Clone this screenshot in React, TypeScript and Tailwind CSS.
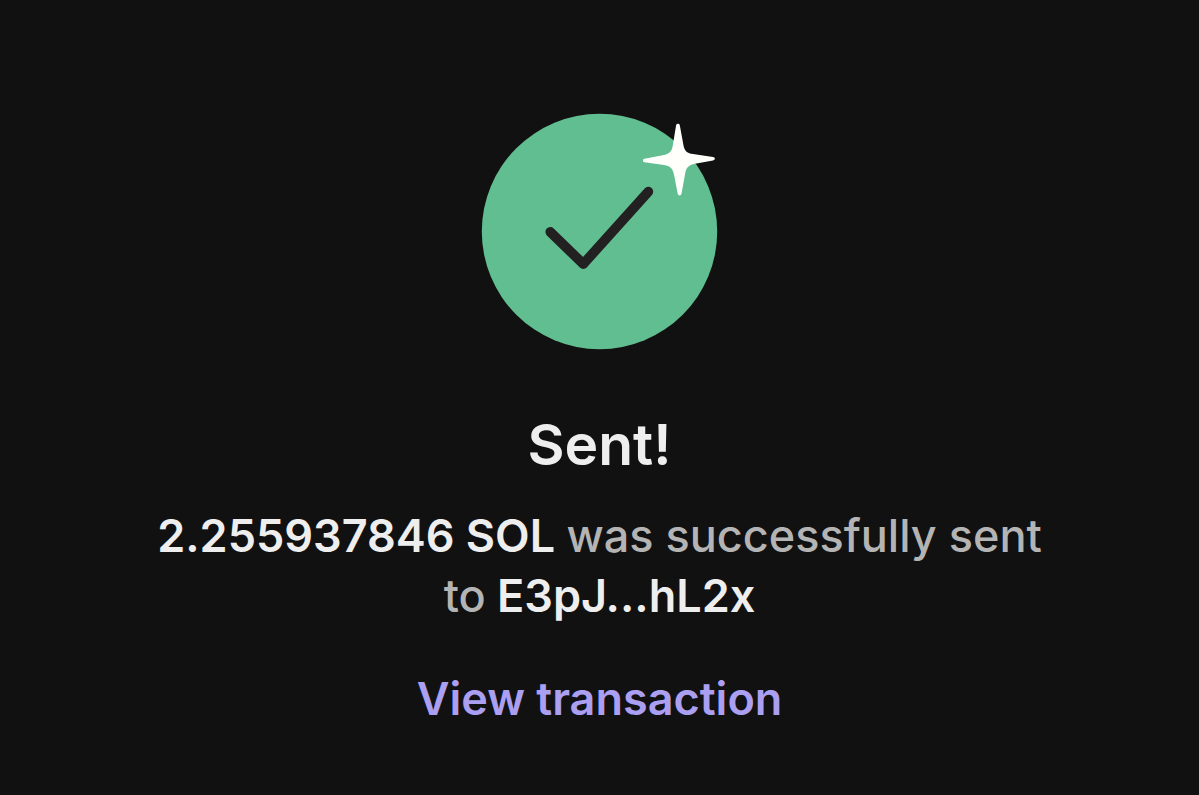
export default function App() {
  return (
    <main className="flex min-h-screen flex-col items-center bg-[#111111] px-36 pt-[113px] pb-16 text-center font-['Inter',sans-serif] font-semibold text-[#eeeeee]">
      <svg className="h-[237px] w-[237px] shrink-0" viewBox="481 113 237 237" fill="none" aria-hidden="true">
        <circle cx="599.5" cy="231.5" r="117.7" fill="#61be91" />
        <path d="M550.3 232L583.3 264L648.3 191.700" stroke="#222021" strokeWidth="9.800" strokeLinecap="round" strokeLinejoin="round" />
        <path
          d="M676.100 125.200Q676.400 123.800 678 123.800Q679.500 123.800 679.800 125.200L683.500 145.500C684.500 151 687.500 153.500 693 154.100L713 157Q714.900 157.300 714.900 158.700Q714.900 160.100 713 160.400L695 163.800C688.500 165.200 686 168 685.200 173.500L681.500 193.800Q681.100 195.400 679.600 195.400Q678.100 195.400 677.700 193.800L674 174.500C672.700 168.500 670 165.800 664 165L644.500 162.200Q642.900 161.900 642.900 160.400Q642.900 159 644.500 158.700L664 154.900C669.500 153.800 671.800 151.300 672.700 146Z"
          fill="#fffffb"
        />
      </svg>
      <h1 className="mt-[60px] text-[57px] leading-[70px]">Sent!</h1>
      <p className="mt-[26px] text-[45px] leading-[60px]">
        <span>2.255937846 SOL</span> <span className="font-medium text-[#b4b4b4]">was successfully sent</span>{" "}
        <span className="font-medium text-[#b4b4b4]">to</span> <span>E3pJ...hL2x</span>
      </p>
      <a href="#transaction" className="mt-[43px] text-[45px] leading-[60px] text-[#ab9ff2]">
        View transaction
      </a>
    </main>
  );
}
